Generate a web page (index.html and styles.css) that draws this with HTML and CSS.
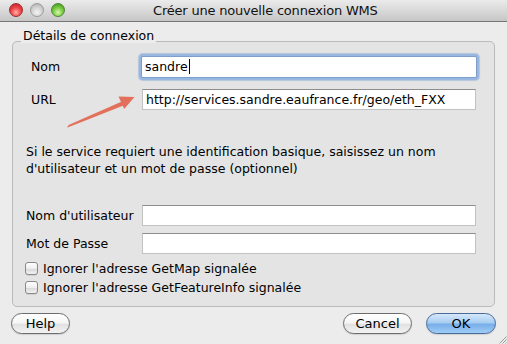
FILE: index.html
```html
<!DOCTYPE html>
<html lang="fr">
<head>
<meta charset="utf-8">
<title>Créer une nouvelle connexion WMS</title>
<link rel="stylesheet" href="styles.css">
</head>
<body>
<div class="window">
  <div class="titlebar">
    <div class="lights">
      <span class="light red"></span>
      <span class="light gray"></span>
      <span class="light green"></span>
    </div>
    <div class="title">Créer une nouvelle connexion WMS</div>
  </div>

  <div class="group">
    <div class="legend">Détails de connexion</div>

    <div class="row main first">
      <div class="label">Nom</div>
      <div class="field focus">sandre<span class="caret"></span></div>
    </div>
    <div class="row main second">
      <div class="label">URL</div>
      <div class="field">http://services.sandre.eaufrance.fr/geo/eth_FXX</div>
    </div>

    <p class="info">Si le service requiert une identification basique, saisissez un nom d'utilisateur et un mot de passe (optionnel)</p>

    <div class="row auth first-auth">
      <div class="label">Nom d'utilisateur</div>
      <div class="field"></div>
    </div>
    <div class="row auth second-auth">
      <div class="label">Mot de Passe</div>
      <div class="field"></div>
    </div>

    <div class="checks">
      <label class="check"><span class="box"></span>Ignorer l'adresse GetMap signalée</label>
      <label class="check"><span class="box"></span>Ignorer l'adresse GetFeatureInfo signalée</label>
    </div>
  </div>

  <div class="buttons">
    <button class="btn help">Help</button>
    <span class="spacer"></span>
    <button class="btn cancel">Cancel</button>
    <button class="btn ok">OK</button>
  </div>

  <svg class="arrow" width="507" height="344" viewBox="0 0 507 344" aria-hidden="true">
    <path d="M67 127.8 L68.6 125 L123 101 L124.8 105 Z" fill="#e3705d"/>
    <polygon points="134.5,97 118.5,96.6 124.2,109" fill="#e3705d"/>
  </svg>

  <svg class="grip" width="10" height="10" viewBox="0 0 10 10" aria-hidden="true">
    <path d="M9.5 2.5 L2.5 9.5 M9.5 5.5 L5.5 9.5 M9.5 8.5 L8.5 9.5" stroke="#9a9a9a" stroke-width="1"/>
  </svg>
</div>
</body>
</html>
```

FILE: styles.css
```css
* { box-sizing: border-box; }

html, body {
  margin: 0;
  padding: 0;
}

body {
  width: 507px;
  height: 344px;
  overflow: hidden;
  background: #ececec;
  font-family: "DejaVu Sans", "Liberation Sans", sans-serif;
  font-size: 12.5px;
  color: #000;
}

.window {
  position: relative;
  width: 507px;
  height: 344px;
  background: #ececec;
  display: flex;
  flex-direction: column;
}

/* Title bar */
.titlebar {
  height: 22px;
  flex: 0 0 22px;
  display: flex;
  align-items: center;
  background: linear-gradient(#ebebeb, #d9d9d9 50%, #c6c6c6);
  border-bottom: 1px solid #777;
  padding-bottom: 1px;
}

.lights {
  display: flex;
  gap: 7px;
  padding-left: 9px;
}

.light {
  width: 14px;
  height: 14px;
  border-radius: 50%;
  display: block;
}

.light.red {
  background: radial-gradient(circle at 50% 70%, #ffb1a8 0%, #f0484c 45%, #b81a24 100%);
  border: 1px solid #9a3030;
}

.light.gray {
  background: radial-gradient(circle at 50% 70%, #f4f4f4 0%, #d2d2d2 50%, #a8a8a8 100%);
  border: 1px solid #9b9b9b;
}

.light.green {
  background: radial-gradient(circle at 50% 70%, #d8f8b0 0%, #7ccc44 45%, #368a14 100%);
  border: 1px solid #4a8636;
}

.title {
  margin-left: 88px;
  font-size: 13px;
  letter-spacing: -0.2px;
  color: #111;
  white-space: nowrap;
}

/* Group box */
.group {
  margin: 19px 12px 0 12px;
  height: 266px;
  border: 1px solid #bababa;
  border-radius: 5px;
  background: #e4e4e4;
  padding: 0 0 0 13px;
  display: flex;
  flex-direction: column;
}

.legend {
  align-self: flex-start;
  margin-top: -14px;
  margin-left: -5px;
  padding: 0 2px;
  line-height: 15px;
  background: #ececec;
  white-space: nowrap;
}

.row {
  display: flex;
  align-items: center;
  height: 21px;
}

.row .label {
  width: 116px;
  flex: 0 0 116px;
  white-space: nowrap;
}

.row.main .label {
  padding-left: 5px;
}

.row.first { margin-top: 13px; }
.row.second { margin-top: 12px; }
.row.first-auth { margin-top: 28px; }
.row.second-auth { margin-top: 7px; }

.field {
  width: 334px;
  height: 21px;
  background: #fff;
  border: 1px solid #c2c2c2;
  border-top-color: #8d8d8d;
  padding: 0 3px;
  line-height: 19px;
  white-space: nowrap;
  overflow: hidden;
  display: flex;
  align-items: center;
}

.field.focus {
  width: 336px;
  height: 22px;
  margin-left: -1px;
  border: 1px solid #7e9ec8;
  border-radius: 2px;
  box-shadow: 0 0 0 2px #97b7e0, 0 0 1px 3px rgba(120, 160, 215, 0.45);
}

.caret {
  display: inline-block;
  width: 1px;
  height: 15px;
  background: #000;
  margin-left: 1px;
}

.info {
  margin: 33px 0 0 0;
  line-height: 17px;
  width: 430px;
}

.checks {
  margin-top: 5px;
  display: flex;
  flex-direction: column;
}

.check {
  display: flex;
  align-items: center;
  height: 19px;
  white-space: nowrap;
}

.box {
  width: 13px;
  height: 13px;
  margin-left: -1px;
  margin-right: 5px;
  border: 1px solid #888;
  border-radius: 3px;
  background: linear-gradient(#ffffff, #eeeeee 50%, #d8d8d8 55%, #f2f2f2);
  box-shadow: 0 1px 0 rgba(0, 0, 0, 0.08);
}

/* Buttons */
.buttons {
  display: flex;
  align-items: center;
  margin-top: 6px;
  padding: 0 11px;
}

.spacer { flex: 1; }

.btn {
  font-family: "DejaVu Sans", "Liberation Sans", sans-serif;
  font-size: 13px;
  color: #000;
  height: 21px;
  padding: 0;
  border: 1px solid #6c6c6c;
  border-radius: 11px;
  background: linear-gradient(#ffffff, #f6f6f6 45%, #e2e2e2 55%, #f2f2f2);
  box-shadow: 0 1px 1px rgba(0, 0, 0, 0.12);
  line-height: 19px;
}

.btn.help { width: 59px; }
.btn.cancel { width: 69px; margin-right: 14px; }
.btn.ok {
  width: 70px;
  border-color: #4a6a98;
  background: linear-gradient(#d6e8fa, #a8cdf2 45%, #78aee9 55%, #9fcdf6);
}

/* Overlays */
.arrow {
  position: absolute;
  left: 0;
  top: 0;
  pointer-events: none;
}

.grip {
  position: absolute;
  right: 0;
  bottom: 0;
}
```
